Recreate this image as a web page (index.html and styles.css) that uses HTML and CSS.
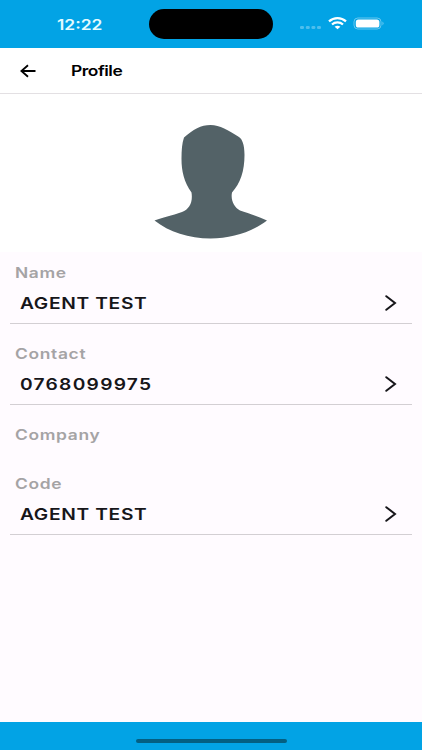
FILE: index.html
```
<!DOCTYPE html>
<html lang="en">
<head>
    <meta charset="UTF-8">
    <meta name="viewport" content="width=device-width, initial-scale=1.0">
    <title>Profile</title>
    <link rel="stylesheet" href="styles.css">
</head>
<body>

    <div class="status-bar">
        <span class="time">12:22</span>
        <div class="island"></div>
        <svg class="status-icons" width="90" height="16" viewBox="0 0 90 16">
            <g fill="#fff" fill-opacity=".3">
                <rect x="2" y="10" width="4" height="3" rx="1.3"/>
                <rect x="7.8" y="10" width="4" height="3" rx="1.3"/>
                <rect x="13.4" y="10" width="4" height="3" rx="1.3"/>
                <rect x="19" y="10" width="4" height="3" rx="1.3"/>
            </g>
            <g fill="none" stroke="#fff" stroke-width="2.2">
                <path d="M31 5.4 C35.8 1 43.2 1 48 5.4"/>
                <path d="M34 8.5 C37 5.7 42 5.7 45 8.5"/>
            </g>
            <path d="M36.6 10.8 C38.3 9.3 40.7 9.3 42.4 10.8 L39.5 13.2 Z" fill="#fff"/>
            <rect x="56" y="2" width="27" height="11" rx="3.8" fill="none" stroke="#fff" stroke-opacity=".4"/>
            <rect x="57.8" y="3.5" width="23.6" height="8" rx="2.6" fill="#fff"/>
            <path d="M84.5 5.600 Q86.7 7.500 84.5 9.400 Z" fill="#fff" fill-opacity=".45"/>
        </svg>
    </div>

    <div class="header">
        <svg class="back" width="16" height="14" viewBox="0 0 16 14">
            <path d="M15.5 7 H1.4 M8 1.200 L1.400 7 L8 12.800" fill="none" stroke="#000" stroke-width="1.8"/>
        </svg>
        <h1>Profile</h1>
    </div>

    <div class="photo">
        <svg width="114" height="116" viewBox="0 0 114 116">
            <path fill="#536267" d="M30 14.5 C39 6.5 47 2 56.5 2 C66 2 74 7 85 14 C88 16 90.5 21 90.5 32 C90.5 48 86.5 60 78 69.5 C76.5 77 80 84 86 87.5 C94 90 104 93.5 113 97.5 C98 109 78 115.5 56.5 115.5 C35 115.5 15 109 0.5 97.5 C8 94.5 18 92.5 28 89 C35.5 86 39 79 37.5 69.5 C30 59 27.5 48 27.5 36 C27.5 27 28 20 30 14.5 Z"/>
        </svg>
    </div>

    <div class="content">
        <div class="field">
            <p class="label">Name</p>
            <div class="row">
                <span class="value">AGENT TEST</span>
                <svg class="chevron" width="12" height="16" viewBox="0 0 12 16">
                    <path d="M1.3 1.2 L10 8 L1.3 14.8"/>
                </svg>
            </div>
        </div>
        <div class="field">
            <p class="label">Contact</p>
            <div class="row">
                <span class="value number">0768099975</span>
                <svg class="chevron" width="12" height="16" viewBox="0 0 12 16">
                    <path d="M1.3 1.2 L10 8 L1.3 14.8"/>
                </svg>
            </div>
        </div>
        <div class="field empty">
            <p class="label">Company</p>
        </div>
        <div class="field">
            <p class="label">Code</p>
            <div class="row">
                <span class="value">AGENT TEST</span>
                <svg class="chevron" width="12" height="16" viewBox="0 0 12 16">
                    <path d="M1.3 1.2 L10 8 L1.3 14.8"/>
                </svg>
            </div>
        </div>
    </div>

    <div class="bottom-bar">
        <div class="home-indicator"></div>
    </div>

</body>
</html>
```
FILE: styles.css
```
* {
    box-sizing: border-box;
}

body {
    margin: 0;
    height: 750px;
    display: flex;
    flex-direction: column;
    overflow: hidden;
    font-family: Inter, "Liberation Sans", sans-serif;
    background: #fffbff;
}

/* wide lettering */
.time,
.header h1,
.label,
.value {
    transform: scaleX(1.2);
    transform-origin: left center;
}

.status-bar {
    height: 48px;
    flex: none;
    display: flex;
    align-items: center;
    background: #02a3e5;
}

.time {
    width: 92px;
    margin-left: 57px;
    font-size: 14.5px;
    font-weight: 600;
    color: #e4fbff;
}

.island {
    width: 124px;
    height: 30px;
    border-radius: 15px;
    background: #000;
}

.status-icons {
    margin-left: 25px;
}

.header {
    height: 46px;
    flex: none;
    display: flex;
    align-items: center;
    padding-left: 20px;
    background: #fff;
    border-bottom: 1px solid #e3e0e3;
}

.header h1 {
    margin: 0 0 0 35px;
    font-size: 14.5px;
    font-weight: 600;
    letter-spacing: -0.4px;
    color: #000;
}

.photo {
    height: 158px;
    flex: none;
    display: flex;
    justify-content: center;
    padding-top: 29px;
    background: #fff;
}

.content {
    flex: 1;
    padding: 10px 10px 0;
}

.field {
    height: 62px;
    padding-top: 1px;
    margin-bottom: 19px;
    display: flex;
    flex-direction: column;
    border-bottom: 1px solid #d3cfd3;
}

.field.empty {
    height: 30px;
    border-bottom: 0;
}

.label {
    align-self: flex-start;
    margin: 0 0 0 5px;
    font-size: 14.5px;
    line-height: 20px;
    font-weight: 600;
    letter-spacing: 0.55px;
    color: #a5a3a5;
}

.row {
    display: flex;
    justify-content: space-between;
    align-items: center;
    height: 40px;
    padding: 0 15px 0 10px;
}

.value {
    font-size: 16px;
    font-weight: 600;
    letter-spacing: 0.55px;
    color: #17161a;
}

.value.number {
    letter-spacing: 1.05px;
}

.chevron path {
    fill: none;
    stroke: #17161a;
    stroke-width: 2;
    stroke-linecap: round;
}

.bottom-bar {
    height: 28px;
    flex: none;
    display: flex;
    justify-content: center;
    padding-top: 17px;
    background: #02a3e5;
}

.home-indicator {
    width: 151px;
    height: 4px;
    border-radius: 2px;
    background: #045f82;
}
```
